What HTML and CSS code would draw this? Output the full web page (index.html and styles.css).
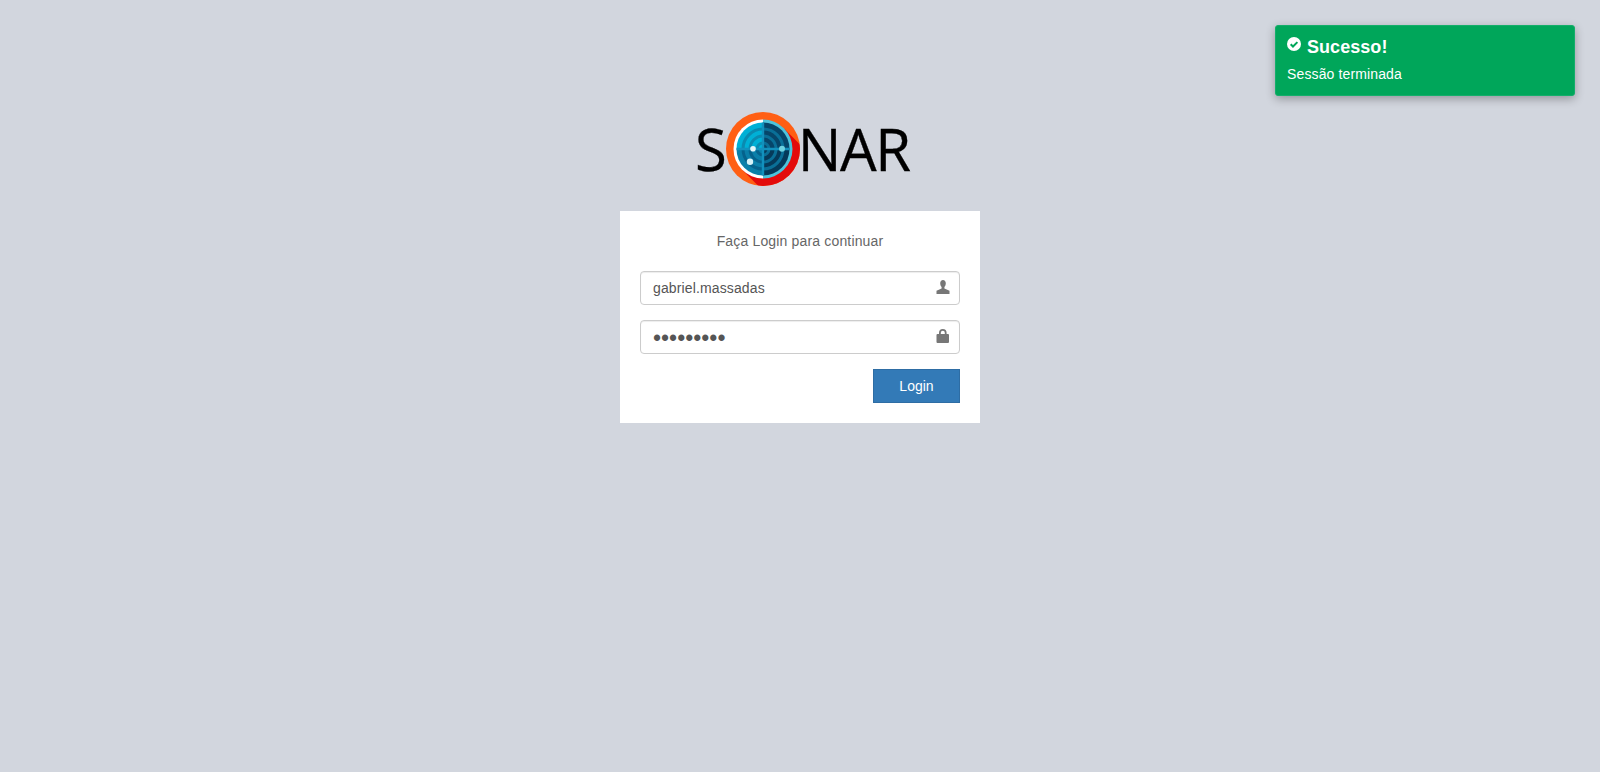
FILE: index.html
```html
<!DOCTYPE html>
<html lang="pt">
<head>
<meta charset="utf-8">
<title>Sonar</title>
<link rel="stylesheet" href="styles.css">
</head>
<body>
<div class="toast">
  <h4 class="toast-title">
    <svg class="toast-icon" viewBox="0 0 14 14"><circle cx="7" cy="7" r="7" fill="#fff"/><path d="M3.700 7.200 6 9.500l4.400-4.400" fill="none" stroke="#00a65a" stroke-width="2"/></svg>
    Sucesso!
  </h4>
  <p class="toast-text">Sessão terminada</p>
</div>
<main class="login-box">
  <div class="logo">
    <span class="logo-s">S</span>
    <svg class="logo-mark" viewBox="0 0 76 76">
      <defs>
        <clipPath id="disk"><circle cx="38" cy="38" r="26.500"/></clipPath>
        <clipPath id="outer"><circle cx="38" cy="38" r="37"/></clipPath>
        <clipPath id="q-tl"><rect x="10" y="10" width="28" height="28"/></clipPath>
        <clipPath id="q-tr"><rect x="38" y="10" width="28" height="28"/></clipPath>
        <clipPath id="q-bl"><rect x="10" y="38" width="28" height="28"/></clipPath>
        <clipPath id="q-br"><rect x="38" y="38" width="28" height="28"/></clipPath>
        <g id="rings" fill="none" stroke-width="3">
          <circle cx="38" cy="38" r="20"/>
          <circle cx="38" cy="38" r="13"/>
          <circle cx="38" cy="38" r="6"/>
        </g>
      </defs>
      <circle cx="38" cy="38" r="37" fill="#ff5f14"/>
      <path d="M58.800 17.200 95 53.400V95H53.400L17.200 58.800Z" fill="#e30b0b" clip-path="url(#outer)"/>
      <path d="M38 8.500a29.500 29.500 0 0 0 0 59Z" fill="#fff"/>
      <path d="M38 8.500a29.500 29.500 0 0 1 0 59Z" fill="#4cc4dc"/>
      <g clip-path="url(#disk)">
        <rect x="10" y="10" width="28" height="28" fill="#00b0d6"/>
        <rect x="38" y="10" width="28" height="28" fill="#06466a"/>
        <rect x="10" y="38" width="28" height="28" fill="#0a7fa9"/>
        <rect x="38" y="38" width="28" height="28" fill="#053a5a"/>
        <g clip-path="url(#q-tl)"><use href="#rings" stroke="#0a8ab0"/></g>
        <g clip-path="url(#q-tr)"><use href="#rings" stroke="#0a6f97"/></g>
        <g clip-path="url(#q-bl)"><use href="#rings" stroke="#05628c"/></g>
        <g clip-path="url(#q-br)"><use href="#rings" stroke="#0a6f97"/></g>
        <path d="M38 10V66M10 38H66" fill="none" stroke="#1291bd" stroke-width="2.400"/>
      </g>
      <circle cx="28" cy="37.700" r="2.800" fill="#e4f6fa"/>
      <circle cx="57" cy="37.700" r="3" fill="#6ed1df"/>
      <circle cx="25" cy="50.700" r="3.200" fill="#d5f2f8"/>
    </svg>
    <span class="logo-rest">NAR</span>
  </div>
  <form class="card">
    <p class="card-msg">Faça Login para continuar</p>
    <div class="field">
      <input class="input" type="text" value="gabriel.massadas">
      <svg class="field-icon" viewBox="0 0 14 14"><path d="M7 0C5.300 0 4.200 1.300 4.200 3.300c0 1.500.6 3 1.400 3.800v1.300L.5 10.700V14h13v-3.300L8.400 8.400V7.100c.8-.8 1.400-2.300 1.400-3.800C9.800 1.300 8.700 0 7 0Z" fill="#777"/></svg>
    </div>
    <div class="field">
      <input class="input input-password" type="password" value="123456789">
      <svg class="field-icon" viewBox="0 0 14 14"><path d="M3 5V3.800a3.800 3.800 0 0 1 7.600 0V5h1.400a1 1 0 0 1 1 1v7a1 1 0 0 1-1 1H1.500a1 1 0 0 1-1-1V6a1 1 0 0 1 1-1ZM4.800 5h4V3.800a2 2 0 0 0-4 0Z" fill="#777" fill-rule="evenodd"/></svg>
    </div>
    <div class="actions">
      <button class="btn" type="button">Login</button>
    </div>
  </form>
</main>
</body>
</html>
```
FILE: styles.css
```css
* { box-sizing: border-box; }
html, body { height: 100%; }
body {
  margin: 0;
  background: #d2d6de;
  font-family: "Liberation Sans", Arial, sans-serif;
  font-size: 14px;
  line-height: 20px;
  color: #666;
  overflow: hidden;
}
.toast {
  position: absolute;
  top: 25px;
  right: 25px;
  width: 300px;
  height: 71px;
  padding: 11px 11px;
  background: #00a65a;
  border: 1px solid #14ae6a;
  border-radius: 3px;
  box-shadow: 0 3px 10px rgba(0, 0, 0, .3);
  color: #fff;
}
.toast-title {
  display: flex;
  align-items: center;
  gap: 6px;
  margin: 0 0 7px;
  font-size: 18px;
  line-height: 20px;
  font-weight: 700;
  letter-spacing: .05px;
}
.toast-icon { width: 14px; height: 14px; margin-top: -6px; }
.toast-text { margin: 0; letter-spacing: .13px; }
.login-box {
  width: 360px;
  margin: 0 auto;
  padding-top: 111px;
}
.logo {
  display: flex;
  align-items: center;
  height: 76px;
  margin-bottom: 24px;
  margin-left: 75px;
  color: #000;
  font-family: "Open Sans", sans-serif;
  font-size: 58px;
  line-height: 76px;
  white-space: nowrap;
  -webkit-text-stroke: .3px #000;
}
.logo-mark { width: 76px; height: 76px; flex: none; margin-left: -2px; margin-right: -3px; }
.logo-rest { letter-spacing: -1.500px; }
.card {
  display: block;
  background: #fff;
  height: 212px;
  padding: 20px;
}
.card-msg { margin: 0 0 20px; text-align: center; letter-spacing: .16px; }
.field { position: relative; margin-bottom: 15px; }
.input {
  display: block;
  width: 100%;
  height: 34px;
  padding: 6px 12px;
  border: 1px solid #ccc;
  border-radius: 4px;
  background: #fff;
  color: #555;
  font: 14px/20px "Liberation Sans", Arial, sans-serif;
  letter-spacing: .13px;
  box-shadow: inset 0 1px 1px rgba(0, 0, 0, .075);
}
.input-password {
  font-size: 23px;
  line-height: normal;
  letter-spacing: 0;
  padding-top: 2px;
  padding-bottom: 0;
}
.field-icon {
  position: absolute;
  top: 9px;
  right: 10px;
  width: 14px;
  height: 14px;
}
.actions { display: flex; justify-content: flex-end; }
.btn {
  width: 87px;
  height: 34px;
  background: #337ab7;
  border: 1px solid #2e6da4;
  color: #fff;
  font: 14px/20px "Liberation Sans", Arial, sans-serif;
  padding: 6px 12px;
}
```
